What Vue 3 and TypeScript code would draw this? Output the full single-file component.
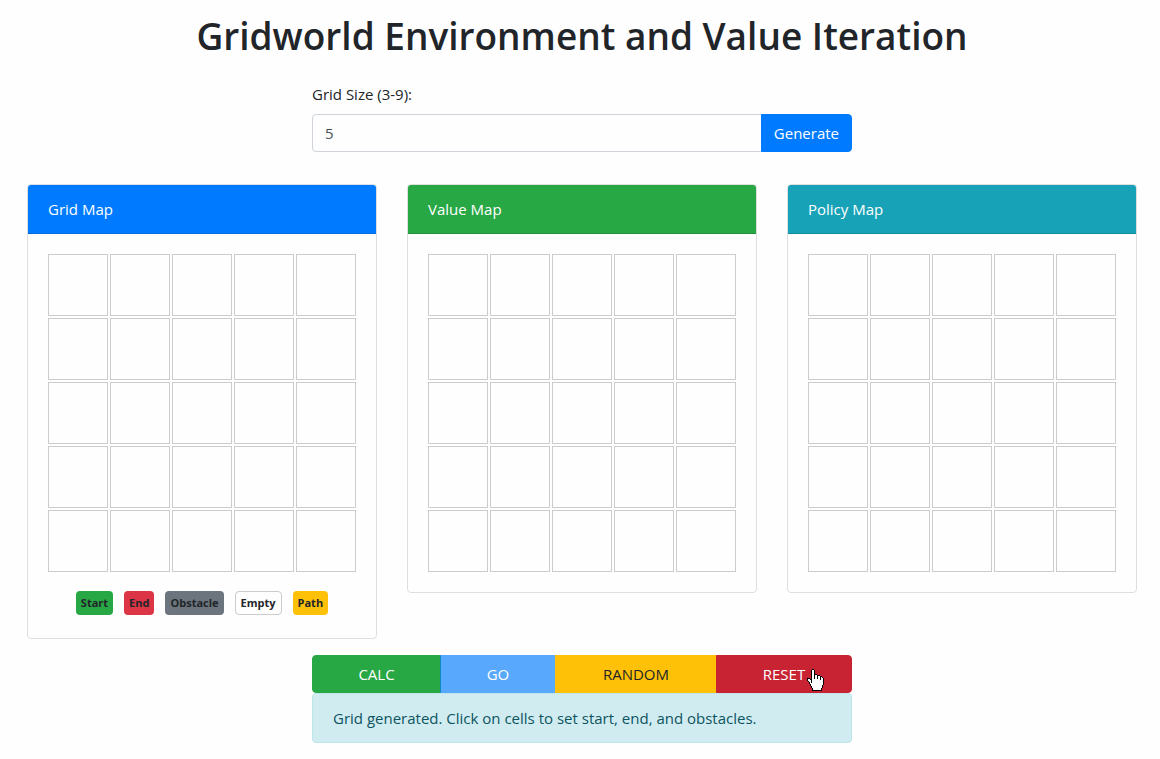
<script setup lang="ts">
import { computed, ref } from 'vue'

type CellKind = 'empty' | 'start' | 'end' | 'obstacle' | 'path'

const sizeInput = ref<number>(5)
const size = ref<number>(5)
const cells = ref<CellKind[]>(Array(25).fill('empty'))
const message = ref('Grid generated. Click on cells to set start, end, and obstacles.')
const ready = computed(() => cells.value.includes('start') && cells.value.includes('end') && solved.value)
const solved = ref(false)

const maps = [
  { id: 'grid', title: 'Grid Map' },
  { id: 'value', title: 'Value Map' },
  { id: 'policy', title: 'Policy Map' },
]

const legend = [
  { kind: 'start', label: 'Start' },
  { kind: 'end', label: 'End' },
  { kind: 'obstacle', label: 'Obstacle' },
  { kind: 'empty', label: 'Empty' },
  { kind: 'path', label: 'Path' },
]

function generate() {
  size.value = Math.min(9, Math.max(3, Number(sizeInput.value) || 5))
  cells.value = Array(size.value * size.value).fill('empty')
  solved.value = false
}

function mark(index: number) {
  const current = cells.value[index]
  if (current !== 'empty') cells.value[index] = 'empty'
  else if (!cells.value.includes('start')) cells.value[index] = 'start'
  else if (!cells.value.includes('end')) cells.value[index] = 'end'
  else cells.value[index] = 'obstacle'
}

function randomize() {
  generate()
  const order = cells.value.map((_, i) => i).sort(() => Math.random() - 0.5)
  order.slice(0, size.value + 2).forEach(mark)
}
</script>

<template>
  <main class="page">
    <h1>Gridworld Environment and Value Iteration</h1>

    <form class="narrow size-form" @submit.prevent="generate">
      <label for="grid-size">Grid Size (3-9):</label>
      <div class="input-group">
        <input id="grid-size" v-model="sizeInput" type="number" min="3" max="9" />
        <button type="submit" class="generate">Generate</button>
      </div>
    </form>

    <div class="maps">
      <section v-for="map in maps" :key="map.id" class="card">
        <h2 class="card-header" :class="map.id">{{ map.title }}</h2>
        <div class="card-body">
          <div class="cells" :style="{ gridTemplateColumns: `repeat(${size}, 1fr)` }">
            <template v-if="map.id === 'grid'">
              <button
                v-for="(kind, i) in cells"
                :key="i"
                type="button"
                class="cell"
                :class="kind"
                :aria-label="`Cell ${i + 1}, ${kind}`"
                @click="mark(i)"
              ></button>
            </template>
            <template v-else>
              <div v-for="(_, i) in cells" :key="i" class="cell"></div>
            </template>
          </div>
          <div v-if="map.id === 'grid'" class="legend">
            <span v-for="item in legend" :key="item.kind" class="tag" :class="item.kind">{{ item.label }}</span>
          </div>
        </div>
      </section>
    </div>

    <div class="narrow">
      <div class="actions">
        <button type="button" class="calc" @click="solved = true">CALC</button>
        <button type="button" class="go" :disabled="!ready">GO</button>
        <button type="button" class="random" @click="randomize">RANDOM</button>
        <button type="button" class="reset" @click="generate">
          RESET
          <svg class="pointer" width="17" height="22" viewBox="0 0 17 22" aria-hidden="true">
            <path
              d="M5.5 .5H6.5L7.5 1.5V5.5H9.5L10.5 6.5H12.5L13.5 7.5H14.5L16.5 9.5V15.5L15.5 16.5V18.5L14.5 19.5V21.5H5.5V19.5L4.5 18.5V17.5L3.5 16.5V15.5L2.5 14.5V13.5L.5 11.5V9.5H2.5L4.5 11.5V1.5Z"
              fill="#fff"
              stroke="#000"
            />
            <path d="M7.5 5V10M10.5 6V10M13.5 7V11M4.5 11V14" fill="none" stroke="#000" />
          </svg>
        </button>
      </div>
      <div class="alert" role="status">{{ message }}</div>
    </div>
  </main>
</template>

<style>
body {
  margin: 0;
  background: #fefefe;
}
</style>

<style scoped>
.page,
.page * {
  box-sizing: border-box;
}
.page {
  padding: 12px 23px 16px 27px;
  font-family: 'Segoe UI', 'Open Sans', 'Noto Sans', sans-serif;
  font-size: 15px;
  line-height: 24px;
  color: #212529;
}
button,
input {
  font: inherit;
}
h1 {
  margin: 0 0 22px;
  text-align: center;
  font-size: 37px;
  font-weight: 600;
  line-height: 48px;
}
.narrow {
  max-width: 540px;
  margin: 0 auto;
}
.size-form label {
  display: block;
  margin-bottom: 8px;
}
.input-group {
  display: flex;
}
.input-group input {
  flex: 1;
  min-width: 0;
  height: 38px;
  padding: 6px 12px;
  border: 1px solid #ced4da;
  border-radius: 4px 0 0 4px;
  background: #fefefe;
  color: #495057;
}
.generate {
  margin-left: -1px;
  padding: 6px 12px;
  border: 1px solid #007bff;
  border-radius: 0 4px 4px 0;
  background: #007bff;
  color: #fff;
}
.maps {
  display: grid;
  grid-template-columns: repeat(3, 1fr);
  align-items: start;
  gap: 30px;
  margin: 32px 0 16px;
}
.card {
  border: 1px solid #dfdfdf;
  border-radius: 4px;
}
.card-header {
  margin: 0;
  padding: 12px 20px;
  border-bottom: 1px solid rgba(0, 0, 0, 0.125);
  border-radius: 3px 3px 0 0;
  font-size: 15px;
  font-weight: 400;
  color: #fff;
}
.card-header.grid {
  background-color: #007bff;
}
.card-header.value {
  background-color: #28a745;
}
.card-header.policy {
  background-color: #17a2b8;
}
.card-body {
  padding: 20px;
}
.cells {
  display: grid;
  gap: 2px;
}
.cell {
  height: 62px;
  padding: 0;
  border: 1px solid #ccc;
  border-radius: 0;
  background: #fefefe;
}
.legend {
  display: flex;
  justify-content: center;
  gap: 11px;
  margin: 19px 0 3px;
}
.tag {
  padding: 0 5px;
  border-radius: 4px;
  font-size: 11px;
  font-weight: 700;
  line-height: 24px;
}
.start {
  background: #28a745;
}
.end {
  background: #dc3545;
}
.obstacle {
  background: #6c757d;
}
.path {
  background: #ffc107;
}
.tag.empty {
  border: 1px solid #ccc;
  line-height: 22px;
}
.actions {
  display: flex;
}
.actions button {
  height: 38px;
  padding: 6px 12px;
  border: 1px solid transparent;
  color: #fff;
}
.actions button + button {
  margin-left: -1px;
}
.actions .calc {
  flex: 103 1 0;
  border-color: #28a745;
  border-radius: 4px 0 0 4px;
  background: #28a745;
}
.actions .go {
  flex: 90 1 0;
  border-color: #007bff;
  background: #007bff;
}
.actions .go:disabled {
  opacity: 0.65;
}
.actions .random {
  position: relative;
  flex: 136 1 0;
  border-color: #ffc107;
  background: #ffc107;
  color: #212529;
}
.actions .reset {
  position: relative;
  flex: 110 1 0;
  border-color: #c82333;
  border-radius: 0 4px 4px 0;
  background: #c82333;
}
.pointer {
  position: absolute;
  right: 27px;
  top: 13px;
  shape-rendering: crispEdges;
}
.alert {
  padding: 12px 20px;
  border: 1px solid #bee5eb;
  border-radius: 4px;
  background: #d1ecf1;
  color: #0c5460;
}
</style>
